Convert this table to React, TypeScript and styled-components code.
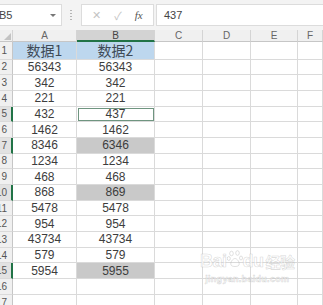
import React from 'react'
import styled, { createGlobalStyle, css } from 'styled-components'

const GlobalStyle = createGlobalStyle`
  html, body {
    margin: 0;
    padding: 0;
    background: #ffffff;
  }
  body {
    width: 323px;
    height: 305px;
    overflow: hidden;
    font-family: "Liberation Sans", "Noto Sans CJK SC", sans-serif;
  }
`

const green = '#217346'

// ---------- formula bar ----------

const TopBar = styled.div`
  display: flex;
  align-items: center;
  height: 30px;
  background: #f3f3f3;
  box-sizing: border-box;
`

const NameBox = styled.div`
  display: flex;
  align-items: center;
  justify-content: space-between;
  width: 64px;
  height: 22px;
  margin-left: -2px;
  padding: 0 3px 0 0;
  background: #fff;
  border: 1px solid #dcdcdc;
  box-sizing: border-box;
  font-size: 11px;
  color: #444;

  & .caret {
    width: 0;
    height: 0;
    border-left: 3px solid transparent;
    border-right: 3px solid transparent;
    border-top: 3px solid #777;
    margin-right: 2px;
  }
`

const Dots = styled.div`
  display: flex;
  flex-direction: column;
  gap: 2px;
  margin: 0 9px 0 8px;

  & span {
    width: 2px;
    height: 1px;
    background: #b5b5b5;
  }
`

const ActionBox = styled.div`
  display: flex;
  align-items: center;
  justify-content: space-around;
  width: 73px;
  height: 22px;
  padding: 0 4px;
  background: #fff;
  border: 1px solid #dcdcdc;
  box-sizing: border-box;
  color: #c4c4c4;
  font-size: 11px;

  & .fx {
    font-family: "Liberation Serif", serif;
    font-style: italic;
    color: #555;
    font-size: 11px;
  }
`

const FormulaInput = styled.div`
  flex: 1;
  height: 22px;
  margin-left: 2px;
  display: flex;
  align-items: center;
  padding-left: 7px;
  background: #fff;
  border: 1px solid #dcdcdc;
  border-right: none;
  box-sizing: border-box;
  font-size: 11px;
  color: #444;
`

// ---------- sheet grid ----------

const Sheet = styled.div`
  position: relative;
  display: grid;
  grid-template-columns: 13px 64px 78px 48px 48px 47px 1fr;
  grid-template-rows: 12px 17.5px repeat(16, 15.7px);
  background: #fff;
`

const HeadCell = styled.div<{ $active?: boolean }>`
  display: flex;
  align-items: center;
  justify-content: center;
  background: #f0f0f0;
  border-right: 1px solid #d4d4d4;
  border-bottom: 1px solid #c6c6c6;
  box-sizing: border-box;
  font-size: 10px;
  color: #666;
  ${(p) =>
    p.$active &&
    css`
      background: #d3d3d3;
      border-bottom: 2px solid ${green};
      color: #444;
    `}
`

const Corner = styled(HeadCell)`
  position: relative;
  &::after {
    content: '';
    position: absolute;
    right: 1px;
    bottom: 1px;
    width: 0;
    height: 0;
    border-left: 7px solid transparent;
    border-bottom: 7px solid #c3c3c3;
  }
`

const RowHead = styled.div<{ $marked?: boolean }>`
  display: flex;
  align-items: center;
  justify-content: flex-end;
  padding-right: 5px;
  background: #f0f0f0;
  border-right: 1px solid #c6c6c6;
  border-bottom: 1px solid #dadada;
  box-sizing: border-box;
  font-size: 10px;
  color: #555;
  overflow: hidden;
  white-space: nowrap;
  ${(p) =>
    p.$marked &&
    css`
      border-right: 2px solid ${green};
      background: #e2e2e2;
      padding-right: 4px;
    `}
`

type Fill = 'none' | 'blue' | 'gray'

const fills: Record<Fill, string> = {
  none: '#ffffff',
  blue: '#bdd7ee',
  gray: '#c9c9c9',
}

const Cell = styled.div<{ $fill?: Fill; $title?: boolean; $active?: boolean }>`
  display: flex;
  align-items: center;
  justify-content: center;
  background: ${(p) => fills[p.$fill ?? 'none']};
  border-right: 1px solid #dadada;
  border-bottom: 1px solid #dadada;
  box-sizing: border-box;
  font-size: 12px;
  color: #3d3d3d;
  ${(p) =>
    p.$title &&
    css`
      font-family: "Noto Sans CJK SC", sans-serif;
      font-size: 14px;
      color: #3f4a56;
    `}
  ${(p) =>
    p.$active &&
    css`
      outline: 1.5px solid #6f9580;
      outline-offset: -2px;
    `}
`

const Watermark = styled.div`
  position: absolute;
  left: 200px;
  top: 220px;
  display: flex;
  flex-direction: column;
  align-items: center;
  color: rgba(255, 255, 255, 0.6);
  -webkit-text-stroke: 0.6px rgba(170, 170, 170, 0.45);
  pointer-events: none;

  & .brand {
    display: flex;
    align-items: center;
    font-family: "Liberation Sans", sans-serif;
    font-weight: bold;
    font-size: 18px;
    letter-spacing: -0.5px;
  }
  & .cn {
    font-family: "Noto Sans CJK SC", sans-serif;
    font-size: 15px;
    margin-left: 2px;
  }
  & .url {
    font-size: 9px;
    font-weight: bold;
    margin-top: 2px;
    letter-spacing: 0.3px;
  }
`

const Paw = () => (
  <svg width="16" height="18" viewBox="0 0 16 18" style={{ margin: '0 0 4px' }}>
    <g fill="none" stroke="rgba(170,170,170,0.45)" strokeWidth="0.8">
      <ellipse cx="4.5" cy="3.5" rx="1.8" ry="2.3" />
      <ellipse cx="10.5" cy="3" rx="1.8" ry="2.3" />
      <ellipse cx="1.8" cy="8.5" rx="1.5" ry="2" />
      <ellipse cx="14" cy="8" rx="1.5" ry="2" />
      <path d="M4 15 C3 12 6 8.5 8 8.5 C10 8.5 13 12 12 15 C11 17 5 17 4 15 Z" />
    </g>
  </svg>
)

const columns = ['A', 'B', 'C', 'D', 'E', 'F']

const data: [string, string][] = [
  ['56343', '56343'],
  ['342', '342'],
  ['221', '221'],
  ['432', '437'],
  ['1462', '1462'],
  ['8346', '6346'],
  ['1234', '1234'],
  ['468', '468'],
  ['868', '869'],
  ['5478', '5478'],
  ['954', '954'],
  ['43734', '43734'],
  ['579', '579'],
  ['5954', '5955'],
  ['', ''],
  ['', ''],
]

const diffRows = new Set([7, 10, 15])
const markedRows = new Set([5, 7, 10, 15])

export default function App() {
  return (
    <>
      <GlobalStyle />
      <TopBar>
        <NameBox>
          <span>B5</span>
          <span className="caret" />
        </NameBox>
        <Dots>
          <span />
          <span />
          <span />
          <span />
        </Dots>
        <ActionBox>
          <span>✕</span>
          <span>✓</span>
          <span className="fx">fx</span>
        </ActionBox>
        <FormulaInput>437</FormulaInput>
      </TopBar>
      <Sheet>
        <Corner />
        {columns.map((c) => (
          <HeadCell key={c} $active={c === 'B'}>
            {c}
          </HeadCell>
        ))}

        <RowHead>1</RowHead>
        <Cell $fill="blue" $title>
          数据1
        </Cell>
        <Cell $fill="blue" $title>
          数据2
        </Cell>
        <Cell />
        <Cell />
        <Cell />
        <Cell />

        {data.map(([a, b], i) => {
          const row = i + 2
          return (
            <React.Fragment key={row}>
              <RowHead $marked={markedRows.has(row)}>{row}</RowHead>
              <Cell>{a}</Cell>
              <Cell $fill={diffRows.has(row) ? 'gray' : 'none'} $active={row === 5}>
                {b}
              </Cell>
              <Cell />
              <Cell />
              <Cell />
              <Cell />
            </React.Fragment>
          )
        })}

        <Watermark>
          <div className="brand">
            Bai
            <Paw />
            du
            <span className="cn">经验</span>
          </div>
          <div className="url">jingyan.baidu.com</div>
        </Watermark>
      </Sheet>
    </>
  )
}
